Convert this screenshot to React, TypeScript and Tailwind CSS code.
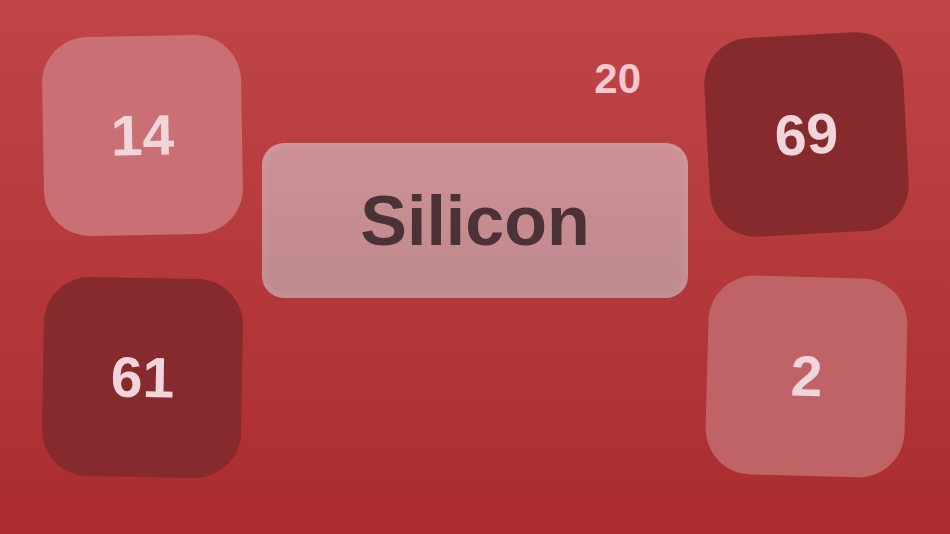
import React from 'react'

type Tile = { value: number; tone: 'light' | 'pale' | 'dark'; tilt: string }

const left: Tile[] = [
  { value: 14, tone: 'light', tilt: '-rotate-1' },
  { value: 61, tone: 'dark', tilt: 'rotate-1' },
]

const right: Tile[] = [
  { value: 69, tone: 'dark', tilt: '-rotate-[3deg]' },
  { value: 2, tone: 'pale', tilt: 'rotate-[1.5deg]' },
]

const toneClass = {
  light: 'bg-[#ca6f73]',
  pale: 'bg-[#c06367]',
  dark: 'bg-[#872a2d]',
}

function NumberTile({ tile }: { tile: Tile }) {
  return (
    <div
      className={`flex h-[199px] w-[199px] items-center justify-center rounded-[46px] ${toneClass[tile.tone]} ${tile.tilt}`}
    >
      <span className="text-[57px] font-bold leading-none text-[#f0d6da]">{tile.value}</span>
    </div>
  )
}

export default function App() {
  return (
    <div
      className="flex h-[534px] w-[950px] overflow-hidden bg-gradient-to-b from-[#bf4548] to-[#aa2c30]"
      style={{ fontFamily: '"Liberation Sans", Arial, sans-serif' }}
    >
      <div className="ml-[43px] mt-[36px] flex w-[199px] flex-col gap-[43px]">
        {left.map((t) => (
          <NumberTile key={t.value} tile={t} />
        ))}
      </div>

      <div className="flex w-[465px] flex-col pt-[58px]">
        <div className="flex justify-end pr-[66px]">
          <span className="text-[42px] font-bold leading-none text-[#f4c8ce]">20</span>
        </div>
        <div className="ml-[20px] mt-[43px] flex h-[155px] w-[426px] items-center justify-center rounded-[22px] bg-gradient-to-b from-[#cc9095] to-[#c08a8d] shadow-[inset_0_0_14px_rgba(255,255,255,0.12)]">
          <span className="text-[70px] font-bold leading-none text-[#4b3236]">Silicon</span>
        </div>
      </div>

      <div className="mt-[35px] flex w-[201px] flex-col gap-[43px]">
        {right.map((t) => (
          <NumberTile key={t.value} tile={t} />
        ))}
      </div>
    </div>
  )
}
